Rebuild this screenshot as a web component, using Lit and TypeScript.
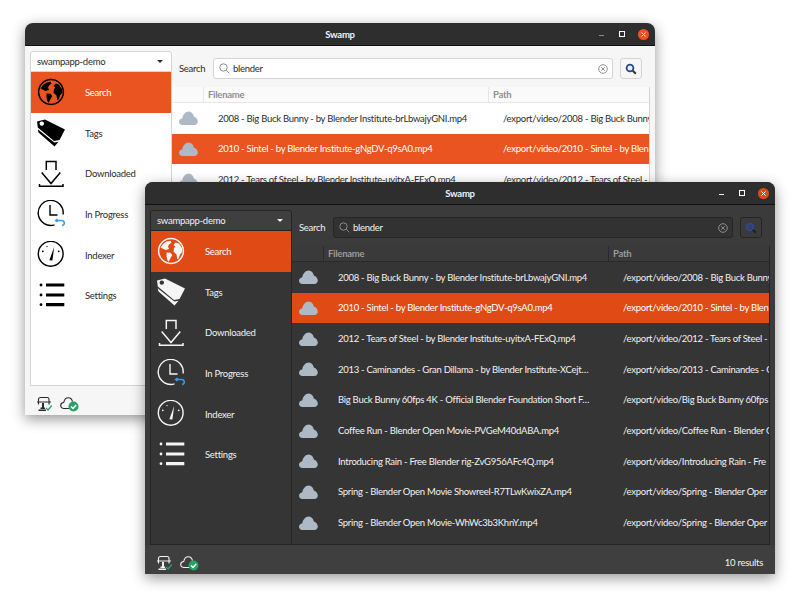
import { LitElement, html, css, svg, nothing } from 'lit';
import { customElement, property } from 'lit/decorators.js';

const FONT = css`
  :host {
    font-family: Lato, 'Noto Sans', sans-serif;
  }
`;

const rows = [
  { name: '2008 - Big Buck Bunny - by Blender Institute-brLbwajyGNI.mp4', dir: '2008 - Big Buck Bunny' },
  { name: '2010 - Sintel - by Blender Institute-gNgDV-q9sA0.mp4', dir: '2010 - Sintel - by Blen' },
  { name: '2012 - Tears of Steel - by Blender Institute-uyitxA-FExQ.mp4', dir: '2012 - Tears of Steel - by' },
  { name: '2013 - Caminandes - Gran Dillama - by Blender Institute-XCejt…', dir: '2013 - Caminandes - G' },
  { name: 'Big Buck Bunny 60fps 4K - Official Blender Foundation Short F…', dir: 'Big Buck Bunny 60fps' },
  { name: 'Coffee Run - Blender Open Movie-PVGeM40dABA.mp4', dir: 'Coffee Run - Blender O' },
  { name: 'Introducing Rain - Free Blender rig-ZvG956AFc4Q.mp4', dir: 'Introducing Rain - Fre' },
  { name: 'Spring - Blender Open Movie Showreel-R7TLwKwixZA.mp4', dir: 'Spring - Blender Oper' },
  { name: 'Spring - Blender Open Movie-WhWc3b3KhnY.mp4', dir: 'Spring - Blender Oper' },
];

const navIcons = {
  globe: svg`
    <circle cx="14" cy="14" r="12.4" fill="none" stroke="currentColor" stroke-width="1.5"/>
    <path fill="currentColor" d="M3.500 10.500 6 7 9.500 4.500 13.500 3.800 14.500 5.500 12 7.500 11 9.500 12 12 8.500 13 5.500 11.500zM9.500 15.500 13.500 15.700 15.300 18 13.300 21.500 11.700 24.800 10.500 23.500 9.500 19.500zM18.500 5.500 22 6.500 25.300 11.500 25.200 15 23 17.500 21.800 21.500 20.300 22.300 19.500 17.500 16.500 14.500 17 11 18.500 9.500 16.500 8z"/>`,
  tags: svg`
    <path fill="currentColor" d="M.7 10.200 1.500 13.500 17.500 27.500 21.500 22.700 17.300 23.600z"/>
    <path fill="currentColor" fill-rule="evenodd" d="M0 2.500 8 .5 28 10.500 22.500 21 17 22 .8 8.500zM4.800 2.400a2.200 2.200 0 1 0 .01 0z"/>`,
  download: svg`
    <path fill="none" stroke="currentColor" stroke-width="1.500" d="M9.300 10V1.500h9.700V10M4.700 12.500 14 23.500 23.300 12.500M2.500 24v2.300h23.500V24"/>`,
  clock: svg`
    <path fill="none" stroke="currentColor" stroke-width="1.400" d="M17.500 24.800A12.500 12.500 0 1 1 26.100 14.500"/>
    <path fill="none" stroke="currentColor" stroke-width="1.400" d="M13 5v10h7.500"/>
    <path fill="none" stroke="#3d9be9" stroke-width="1.600" d="M19 20.500h5.500a2.300 2.300 0 0 1 .5 5M20.500 19l-1.800 1.500 1.800 1.500"/>`,
  gauge: svg`
    <circle cx="13.700" cy="12.800" r="12.400" fill="none" stroke="currentColor" stroke-width="1.400"/>
    <path fill="currentColor" d="M17.200 5.800 15.400 19.500 12.400 19.200z"/>
    <circle cx="5.800" cy="10.300" r=".9" fill="currentColor"/>
    <circle cx="21.700" cy="10.300" r=".9" fill="currentColor"/>
    <circle cx="10" cy="5.600" r=".7" fill="currentColor"/>`,
  list: svg`
    <circle cx="4" cy="3" r="1.400" fill="currentColor"/>
    <circle cx="4" cy="13" r="1.400" fill="currentColor"/>
    <circle cx="4" cy="22.700" r="1.400" fill="currentColor"/>
    <path fill="currentColor" d="M9 1.400h18.300v3.200H9zM9 11.400h18.300v3.200H9zM9 21.100h18.300v3.200H9z"/>`,
};

const cloud = svg`<path fill="#adbac6" d="M3.500 14C1.300 14 0 12.600 0 10.800 0 8.900 1.400 7.500 3.200 7.400 4 3.300 6.600.5 9.800.5c2.600 0 4.500 2.200 5 5 2.400.8 4 2.800 4 5 0 2.100-1.500 3.500-3.500 3.500z"/>`;

@customElement('swamp-window')
class SwampWindow extends LitElement {
  @property({ type: Boolean, reflect: true }) dark = false;
  @property({ type: Number }) visibleRows = rows.length;

  static styles = [
    FONT,
    css`
      :host {
        --title: #2e2e2e;
        --bg: #f6f6f6;
        --view: #ffffff;
        --fg: #2a2a2a;
        --muted: #8f8f8f;
        --line: #e8e8e8;
        --frame: #d4d4d4;
        --accent: #e95420;
        --entry: #ffffff;
        --footer: #f6f6f6;
        --head: #fafafa;
        --nav-icon: #000000;
        --min: #8a8a8a;
        --lens: #e8eefa;
        --lens-ring: #26468f;
        --lens-handle: #333333;
        display: block;
        width: 630px;
        height: 392px;
        border-radius: 8px 8px 0 0;
        box-shadow: 0 4px 14px rgba(0, 0, 0, 0.42);
        font-size: 9.5px;
        letter-spacing: -0.27px;
      }
      :host([dark]) {
        --bg: #3b3b3b;
        --view: #353535;
        --fg: #f2f2f2;
        --muted: #9a9a9a;
        --line: #2a2a2a;
        --frame: #252525;
        --accent: #e04a15;
        --entry: #323232;
        --footer: #3f3f3f;
        --head: #3a3a3a;
        --nav-icon: #f5f5f5;
        --min: #eeeeee;
        --lens: #3b4150;
        --lens-ring: #2c479c;
        --lens-handle: #222222;
      }
      .shell {
        width: 100%;
        height: 100%;
        display: flex;
        flex-direction: column;
        overflow: hidden;
        border-radius: 8px 8px 0 0;
        background: var(--bg);
        color: var(--fg);
      }
      .titlebar {
        flex: none;
        height: 22px;
        display: grid;
        grid-template-columns: 1fr auto 1fr;
        align-items: center;
        background: var(--title);
        border-bottom: 1px solid #111;
        color: #f2f2f2;
      }
      .title {
        grid-column: 2;
        font-weight: 700;
      }
      .controls {
        grid-column: 3;
        justify-self: end;
        display: flex;
        align-items: center;
        padding-right: 6px;
      }
      .min {
        width: 5px;
        height: 1px;
        margin: 3px 15px 0 0;
        background: var(--min);
      }
      .max {
        width: 4px;
        height: 4px;
        margin-right: 13px;
        border: 1px solid #fff;
      }
      .close {
        width: 11px;
        height: 11px;
        border-radius: 50%;
        background: var(--accent);
        display: flex;
      }
      .body {
        flex: 1;
        min-height: 0;
        display: flex;
        padding: 5px 5px 0;
      }
      .sidebar {
        flex: none;
        width: 142px;
        display: flex;
        flex-direction: column;
      }
      .combo {
        flex: none;
        height: 21px;
        box-sizing: border-box;
        display: flex;
        align-items: center;
        justify-content: space-between;
        padding: 0 8px 0 6px;
        background: var(--entry);
        border: 1px solid var(--frame);
        border-radius: 3px 3px 0 0;
      }
      :host([dark]) .combo {
        background: #3f3f3f;
      }
      .caret {
        width: 0;
        height: 0;
        border: 3px solid transparent;
        border-top: 3.5px solid var(--fg);
        border-bottom: 0;
      }
      .nav {
        flex: 1;
        display: flex;
        flex-direction: column;
        background: var(--view);
        border-left: 1px solid var(--frame);
        border-right: 1px solid var(--frame);
        border-bottom: 1px solid var(--frame);
      }
      .nav-item {
        flex: none;
        height: 40.7px;
        display: flex;
        align-items: center;
        padding-left: 6px;
        gap: 20px;
        color: var(--fg);
      }
      .nav-item svg {
        color: var(--nav-icon);
      }
      .nav-item.active {
        background: var(--accent);
        color: #fff;
      }
      .main {
        flex: 1;
        min-width: 0;
        display: flex;
        flex-direction: column;
      }
      .search {
        flex: none;
        display: flex;
        align-items: center;
        gap: 7px;
        padding: 7px 8px 8px 7px;
      }
      .search-label {
        flex: none;
        width: 27px;
      }
      .entry {
        flex: 1;
        height: 21px;
        box-sizing: border-box;
        display: flex;
        align-items: center;
        gap: 3px;
        padding: 0 4px 0 5px;
        background: var(--entry);
        border: 1px solid var(--frame);
        border-radius: 3px;
        color: var(--fg);
      }
      .entry span {
        flex: 1;
      }
      .go {
        flex: none;
        width: 22px;
        height: 21px;
        box-sizing: border-box;
        display: flex;
        align-items: center;
        justify-content: center;
        background: var(--bg);
        border: 1px solid var(--frame);
        border-radius: 3px;
      }
      .table {
        flex: 1;
        min-height: 0;
        overflow: hidden;
        background: var(--view);
        border-right: 1px solid var(--frame);
        border-bottom: 1px solid var(--frame);
      }
      .head {
        height: 15px;
        display: grid;
        grid-template-columns: 32px 285px 1fr;
        align-items: center;
        background: var(--head);
        color: var(--muted);
        font-weight: 700;
        border-bottom: 1px solid var(--line);
      }
      .head > div {
        height: 100%;
        box-sizing: border-box;
        display: flex;
        align-items: center;
        padding-left: 4px;
        border-right: 1px solid var(--line);
      }
      .head > div:last-child {
        border-right: 0;
      }
      .row {
        height: 30.67px;
        display: grid;
        grid-template-columns: 46px 285px 1fr;
        align-items: center;
        box-sizing: border-box;
        white-space: nowrap;
      }
      .row svg {
        margin-left: 7px;
      }
      .row.selected {
        background: var(--accent);
        color: #fff;
      }
      .cell {
        overflow: hidden;
      }
      .footer {
        flex: none;
        height: 29px;
        box-sizing: border-box;
        display: flex;
        align-items: center;
        justify-content: space-between;
        padding: 6px 12px 0 11px;
        background: var(--footer);
      }
      .status {
        display: flex;
        align-items: center;
        gap: 7px;
      }
    `,
  ];

  private navItem(icon: keyof typeof navIcons, label: string, active = false) {
    return html`<div class="nav-item ${active ? 'active' : ''}">
      <svg width="28" height="28" viewBox="0 0 28 28">${navIcons[icon]}</svg>
      <span>${label}</span>
    </div>`;
  }

  render() {
    return html`<div class="shell">
      <div class="titlebar">
        <span class="title">Swamp</span>
        <div class="controls">
          <div class="min"></div>
          <div class="max"></div>
          <div class="close">
            <svg width="11" height="11" viewBox="0 0 11 11">
              <path stroke="#fff" stroke-width="1" d="M3.5 3.5l4 4M7.5 3.5l-4 4" />
            </svg>
          </div>
        </div>
      </div>
      <div class="body">
        <div class="sidebar">
          <div class="combo"><span>swampapp-demo</span><i class="caret"></i></div>
          <div class="nav">
            ${this.navItem('globe', 'Search', true)} ${this.navItem('tags', 'Tags')}
            ${this.navItem('download', 'Downloaded')} ${this.navItem('clock', 'In Progress')}
            ${this.navItem('gauge', 'Indexer')} ${this.navItem('list', 'Settings')}
          </div>
        </div>
        <div class="main">
          <div class="search">
            <span class="search-label">Search</span>
            <div class="entry">
              <svg width="11" height="11" viewBox="0 0 11 11">
                <circle cx="4.5" cy="4.5" r="3.7" fill="none" stroke="#8a8a8a" />
                <path stroke="#8a8a8a" d="M7.3 7.3l3 3" />
              </svg>
              <span>blender</span>
              <svg width="10" height="10" viewBox="0 0 10 10">
                <circle cx="5" cy="5" r="4.3" fill="none" stroke="#8f8f8f" />
                <path stroke="#8f8f8f" d="M3.2 3.2l3.6 3.6M6.8 3.2l-3.6 3.6" />
              </svg>
            </div>
            <div class="go">
              <svg width="12" height="12" viewBox="0 0 12 12">
                <circle cx="5" cy="5" r="3.4" fill="var(--lens)" stroke="var(--lens-ring)" stroke-width="1.8" />
                <path stroke="var(--lens-handle)" stroke-width="2" d="M7.8 7.8l3 3" />
              </svg>
            </div>
          </div>
          <div class="table">
            <div class="head"><div></div><div>Filename</div><div>Path</div></div>
            ${rows.slice(0, this.visibleRows).map(
              (r, i) => html`<div class="row ${i === 1 ? 'selected' : ''}">
                <svg width="19" height="14" viewBox="0 0 19 14">${cloud}</svg>
                <div class="cell">${r.name}</div>
                <div class="cell">/export/video/${r.dir}</div>
              </div>`
            )}
          </div>
        </div>
      </div>
      <div class="footer">
        <div class="status">
          <svg width="17" height="16" viewBox="0 0 17 16">
            <path fill="none" stroke="var(--fg)" stroke-width="1.1" d="M2.500 8.500V3.500Q2.500 1.500 4.500 1.500h6.500q2 0 2 2V8.500M1 6h14" />
            <path fill="var(--fg)" d="M6 7h2v4.500H6zM4.500 11.500h4.500V13H4.500zM2.500 13.500h7.500V15H2.500z" />
            <path fill="none" stroke="#26a269" stroke-width="1.2" d="M10 12l2 2 3.800-4.500" />
          </svg>
          <svg width="19" height="16" viewBox="0 0 19 16">
            <path fill="none" stroke="var(--fg)" stroke-width="1.1" d="M9 12.500H4C2 12.500.7 11.300.7 9.500S2 6.600 3.700 6.500C4.300 3.500 6 1.700 8.300 1.700c2.200 0 3.700 1.600 4.200 4" />
            <circle cx="13.500" cy="10.500" r="5" fill="#26a269" />
            <path fill="none" stroke="#fff" stroke-width="1.500" d="M11 10.500l2 2 3.200-3.500" />
          </svg>
        </div>
        ${this.dark ? html`<span>10 results</span>` : nothing}
      </div>
    </div>`;
  }
}

@customElement('app-root')
export class AppRoot extends LitElement {
  static styles = css`
    :host {
      display: block;
      position: relative;
      width: 800px;
      height: 599px;
      background: #ffffff;
      overflow: hidden;
    }
    swamp-window {
      position: absolute;
    }
    .back {
      left: 25px;
      top: 23px;
    }
    .front {
      left: 145px;
      top: 182px;
    }
  `;

  render() {
    // the light window sits behind, only its first rows can be seen
    return html`<swamp-window class="back" .visibleRows=${3}></swamp-window>
      <swamp-window class="front" dark></swamp-window>`;
  }
}
